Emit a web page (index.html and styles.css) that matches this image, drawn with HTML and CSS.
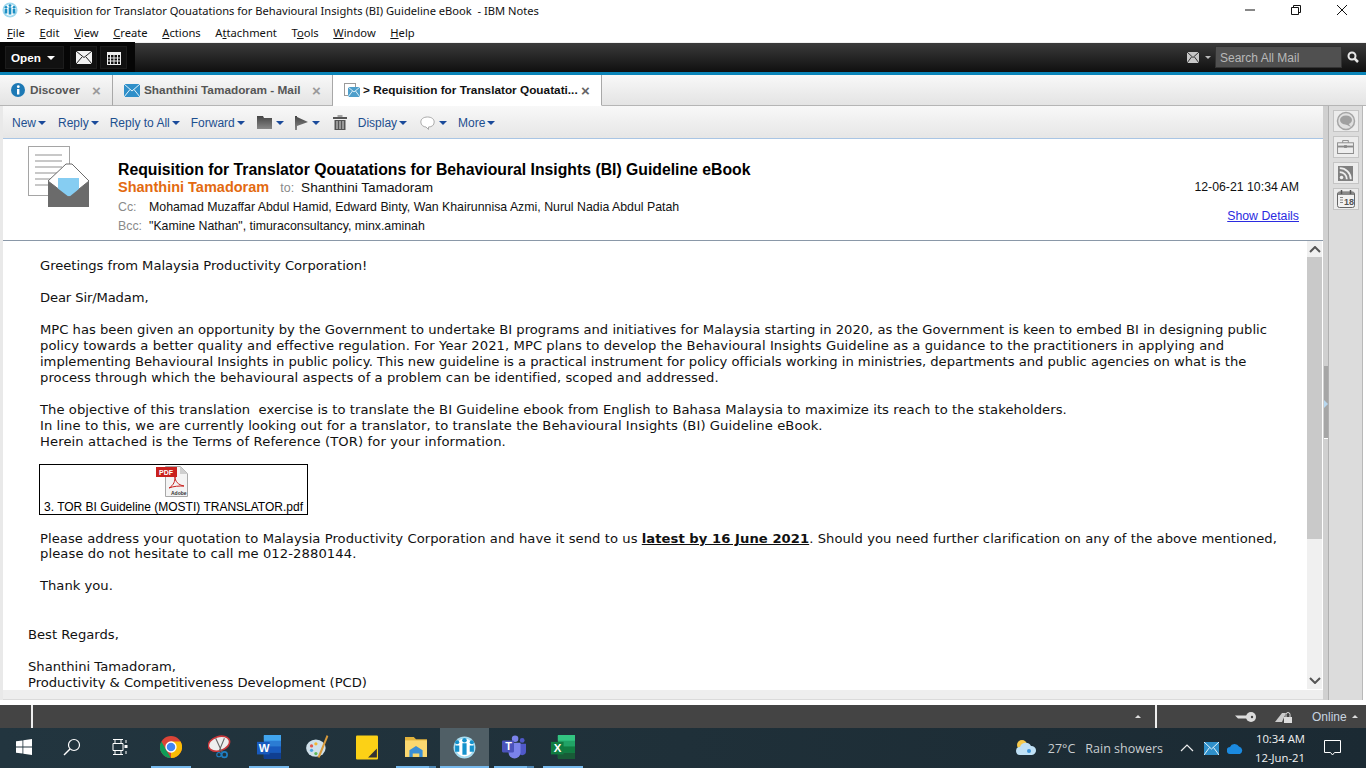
FILE: index.html
```html
<!DOCTYPE html>
<html lang="en">
<head>
<meta charset="utf-8">
<title>IBM Notes</title>
<link rel="stylesheet" href="styles.css">
</head>
<body>
<div class="app">
  <div class="titlebar">
    <svg class="app-icon" width="16" height="16" viewBox="0 0 18 18"><circle cx="9" cy="9" r="8.500" fill="#9fd8ee"/><circle cx="9" cy="9" r="6.500" fill="#fff"/><path d="M3 8h3v5H3zM7.500 6h3v8h-3zM12 8h3v5h-3z" fill="#1b8fc4"/><circle cx="4.500" cy="6" r="1.500" fill="#1b8fc4"/><circle cx="9" cy="4" r="1.600" fill="#1b8fc4"/><circle cx="13.500" cy="6" r="1.500" fill="#1b8fc4"/></svg>
    <span class="title-text">&gt; Requisition for Translator Qouatations for Behavioural Insights (BI) Guideline eBook&nbsp; - IBM Notes</span>
    <div class="winctl">
      <svg width="12" height="12" viewBox="0 0 12 12"><path d="M1 6h10" stroke="#111" fill="none"/></svg>
      <svg width="12" height="12" viewBox="0 0 12 12"><path d="M1.500 3.500h7v7h-7zM3.500 3.500v-2h7v7h-2" stroke="#111" fill="none"/></svg>
      <svg width="12" height="12" viewBox="0 0 12 12"><path d="M1 1l10 10M11 1L1 11" stroke="#111" fill="none"/></svg>
    </div>
  </div>
  <div class="menubar">
    <span><u>F</u>ile</span><span><u>E</u>dit</span><span><u>V</u>iew</span><span><u>C</u>reate</span><span><u>A</u>ctions</span><span>A<u>t</u>tachment</span><span>T<u>o</u>ols</span><span><u>W</u>indow</span><span><u>H</u>elp</span>
  </div>
  <div class="blackbar">
    <div class="black-left">
      <div class="open-btn">Open <i class="caret-white"></i></div>
      <div class="blk-btn"><svg width="16" height="13" viewBox="0 0 16 13"><rect width="16" height="13" fill="#f2f2f2"/><path d="M0 0l8 6.500L16 0M0 13l6-7M16 13l-6-7" stroke="#222" fill="none"/></svg></div>
      <div class="blk-btn"><svg width="14" height="14" viewBox="0 0 14 14"><rect x=".5" y="1.500" width="13" height="12" fill="none" stroke="#eee"/><rect x="0" y="1" width="14" height="3" fill="#eee"/><path d="M0 7h14M0 10h14M3.500 4v9M7 4v9M10.500 4v9" stroke="#eee"/></svg></div>
    </div>
    <div class="black-right">
      <svg width="12" height="11" viewBox="0 0 12 11"><rect width="12" height="11" fill="#c8c8c8"/><path d="M0 0l6 5.500L12 0M0 11l4.500-6M12 11L7.500 5" stroke="#333" fill="none"/></svg>
      <i class="caret-grey"></i>
      <div class="searchbox">Search All Mail</div>
      <svg class="search-ic" width="12" height="12" viewBox="0 0 12 12"><circle cx="5" cy="5" r="3.500" fill="none" stroke="#e8e8e8" stroke-width="2"/><path d="M7.500 7.500L11 11" stroke="#e8e8e8" stroke-width="2.500"/></svg>
    </div>
  </div>
  <div class="tabs">
    <div class="tab tab-discover">
      <svg width="14" height="14" viewBox="0 0 14 14"><circle cx="7" cy="7" r="7" fill="#1d79b5"/><rect x="6" y="6" width="2.400" height="5.500" fill="#fff"/><circle cx="7.300" cy="3.700" r="1.400" fill="#fff"/></svg>
      <span class="tab-label">Discover</span><span class="tab-x">×</span>
    </div>
    <div class="tab tab-mail">
      <svg width="16" height="13" viewBox="0 0 16 13"><rect width="16" height="13" fill="#2f8fc9"/><path d="M0 0l8 7 8-7M0 13l6-7.500M16 13l-6-7.500" stroke="#e3f3fb" fill="none"/></svg>
      <span class="tab-label">Shanthini Tamadoram - Mail</span><span class="tab-x">×</span>
    </div>
    <div class="tab tab-active">
      <svg width="16" height="15" viewBox="0 0 16 15"><rect x=".5" y=".5" width="11" height="12" fill="#fff" stroke="#9a9a9a"/><rect x="4" y="4" width="12" height="10" fill="#4f9fcb"/><path d="M4 4l6 5 6-5M4 14l4.500-6M16 14l-4.500-6" stroke="#d9eef8" fill="none"/></svg>
      <span class="tab-label">&gt; Requisition for Translator Qouatati...</span><span class="tab-x">×</span>
    </div>
    <div class="tabs-fill"></div>
  </div>
  <div class="workspace">
    <div class="document">
      <div class="toolbar">
        <span class="tool">New<i class="caret"></i></span>
        <span class="tool">Reply<i class="caret"></i></span>
        <span class="tool">Reply to All<i class="caret"></i></span>
        <span class="tool tool-fwd">Forward<i class="caret"></i></span>
        <span class="tool"><svg width="15" height="13" viewBox="0 0 15 13"><defs><linearGradient id="tg" x1="0" y1="0" x2="0" y2="1"><stop offset="0" stop-color="#444"/><stop offset="1" stop-color="#888"/></linearGradient></defs><path d="M0 0h6l1 2h8v11H0z" fill="url(#tg)"/></svg><i class="caret caret-wide"></i></span>
        <span class="tool tool-flag"><svg width="13" height="14" viewBox="0 0 13 14"><path d="M0 0h2v14H0zM2 1l11 5-11 4z" fill="url(#tg)"/></svg><i class="caret caret-wide"></i></span>
        <span class="tool"><svg width="14" height="15" viewBox="0 0 14 15"><path d="M4.500 1.500V.5h5v1M0 2h14v2H0zM1.500 5h11v10h-11z" fill="#555"/><path d="M4 6v8M7 6v8M10 6v8" stroke="#ddd"/></svg></span>
        <span class="tool tool-disp">Display<i class="caret"></i></span>
        <span class="tool"><svg width="15" height="14" viewBox="0 0 15 14"><path d="M7.500 1C3.500 1 .8 3 .8 6s2.700 5 5.200 5l2.500 2.500V11c3.500 0 5.700-2 5.700-5S11.500 1 7.500 1z" fill="#fff" stroke="#aaa"/></svg><i class="caret caret-wide"></i></span>
        <span class="tool">More<i class="caret"></i></span>
      </div>
      <div class="msg-head">
        <svg class="doc-icon" width="64" height="62" viewBox="0 0 64 62">
          <rect x=".5" y=".5" width="41" height="49" fill="#fff" stroke="#a5a5a5"/>
          <path d="M7 9h27M7 15h27M7 21h27M7 27h27M7 33h27M7 39h27" stroke="#c8c8c8" stroke-width="2"/>
          <path d="M20 35L38 18h6l17 17-20 16z" fill="#fff" stroke="#6b6b6b"/>
          <path d="M30 32h21v11l-7 7h-6l-8-7z" fill="#86cdf2"/>
          <path d="M20 35l21 16 20-16v26H20z" fill="#6b6b6b"/>
        </svg>
        <div class="head-main">
          <div class="subject">Requisition for Translator Qouatations for Behavioural Insights (BI) Guideline eBook</div>
          <div class="from-row"><span class="sender">Shanthini Tamadoram</span><span class="to-lbl">to:</span><span>Shanthini Tamadoram</span></div>
          <div class="addr-row"><span class="addr-lbl">Cc:</span><span>Mohamad Muzaffar Abdul Hamid, Edward Binty, Wan Khairunnisa Azmi, Nurul Nadia Abdul Patah</span></div>
          <div class="addr-row"><span class="addr-lbl">Bcc:</span><span>"Kamine Nathan", timuraconsultancy, minx.aminah</span></div>
        </div>
        <div class="head-side">
          <div class="date">12-06-21 10:34 AM</div>
          <div class="details">Show Details</div>
        </div>
      </div>
      <div class="msg-wrap">
        <div class="msg-body">
          <div class="inner">
            <p class="s-g">Greetings from Malaysia Productivity Corporation!</p>
            <p class="s-d">Dear Sir/Madam,</p>
            <p>MPC has been given an opportunity by the Government to undertake BI programs and initiatives for Malaysia starting in 2020, as the Government is keen to embed BI in designing public<br><span class="s-l2">policy towards a better quality and effective regulation. For Year 2021, MPC plans to develop the Behavioural Insights Guideline as a guidance to the practitioners in applying and</span><br><span class="s-l3">implementing Behavioural Insights in public policy. This new guideline is a practical instrument for policy officials working in ministries, departments and public agencies on what is the</span><br><span class="s-l4">process through which the behavioural aspects of a problem can be identified, scoped and addressed.</span></p>
            <p><span class="s-l4">The objective of this translation&nbsp; exercise is to translate the BI Guideline ebook from English to Bahasa Malaysia to maximize its reach to the stakeholders.</span><br><span class="s-in">In line to this, we are currently looking out for a translator, to translate the Behavioural Insights (BI) Guideline eBook.</span><br><span class="s-he">Herein attached is the Terms of Reference (TOR) for your information.</span></p>
            <div class="attach">
              <svg width="33" height="31" viewBox="0 0 33 31">
                <path d="M9.500 .5h15l7 7v23h-22z" fill="#f4f4f4" stroke="#a8a8a8"/>
                <path d="M24 0v8h8z" fill="#cfcfcf"/>
                <path d="M13 22c5-3 6-7 6-11 0 4 3 8 9 9-5 0-10 0-15 2z" fill="none" stroke="#c9211e"/>
                <rect x="0" y="1" width="21" height="10" fill="#c9211e"/>
                <text x="3" y="9" class="pdf-t">PDF</text>
                <text x="15" y="29" class="adobe-t">Adobe</text>
              </svg>
              <div class="attach-name">3. TOR BI Guideline (MOSTI) TRANSLATOR.pdf</div>
            </div>
            <p class="tight"><span class="s-l4">Please address your quotation to Malaysia Productivity Corporation and have it send to us <b><u>latest by 16 June 2021</u></b>. Should you need further clarification on any of the above mentioned,</span><br><span class="s-in">please do not hesitate to call me 012-2880144.</span></p>
            <p>Thank you.</p>
          </div>
          <div class="sign">
            <p>Best Regards,</p>
            <p>Shanthini Tamadoram,<br><span class="s-g">Productivity &amp; Competitiveness Development (PCD)</span></p>
          </div>
        </div>
        <div class="vscroll">
          <svg width="12" height="7" viewBox="0 0 12 7"><path d="M1 6l5-5 5 5" fill="none" stroke="#555" stroke-width="2"/></svg>
          <div class="vthumb"></div>
          <div class="vtrack"></div>
          <svg width="12" height="7" viewBox="0 0 12 7"><path d="M1 1l5 5 5-5" fill="none" stroke="#555" stroke-width="2"/></svg>
        </div>
      </div>
      <div class="hscroll"></div>
    </div>
    <div class="splitter"><div class="split-thumb"><i class="split-arrow"></i></div></div>
    <div class="sidebar">
      <div class="side-btn"><svg width="20" height="20" viewBox="0 0 20 20"><circle cx="10" cy="10" r="8.500" fill="#e0e0e0" stroke="#a5a5a5" stroke-width="1.500"/><ellipse cx="10" cy="9" rx="6" ry="4.500" fill="#a0a0a0"/><path d="M12 12l3 4-6-3z" fill="#a0a0a0"/></svg></div>
      <div class="side-btn"><svg width="17" height="14" viewBox="0 0 18 15"><path d="M6 3V.5h6V3" fill="none" stroke="#888"/><rect x=".5" y="3" width="17" height="11.500" fill="#eee" stroke="#888"/><path d="M1 7h16" stroke="#888" stroke-width="2"/><rect x="7.500" y="5.500" width="3" height="3" fill="#888"/></svg></div>
      <div class="side-btn"><svg width="15" height="15" viewBox="0 0 17 17"><rect width="17" height="17" fill="#808080"/><circle cx="4" cy="13" r="2" fill="#eee"/><path d="M2 7a8 8 0 0 1 8 8M2 2.500A12.500 12.500 0 0 1 14.500 15" fill="none" stroke="#eee" stroke-width="2"/></svg></div>
      <div class="side-btn"><svg width="18" height="18" viewBox="0 0 18 18"><rect x=".5" y="2" width="17" height="15.500" rx="2" fill="#f2f2f2" stroke="#666"/><rect x="1" y="2" width="16" height="3" fill="#888"/><path d="M4.500 0v4M13.500 0v4" stroke="#555" stroke-width="1.500"/><path d="M3 7.500h3M3 10h3M3 12.500h3" stroke="#888"/><text x="7" y="15" class="cal-t">18</text></svg></div>
    </div>
    <div class="edge"></div>
  </div>
  <div class="gap"></div>
  <div class="statusbar">
    <div class="st-a"></div>
    <div class="st-b"><i class="caret-up"></i></div>
    <div class="st-c">
      <svg width="21" height="10" viewBox="0 0 21 10"><circle cx="16" cy="5" r="5" fill="#ddd"/><circle cx="17" cy="5" r="1.200" fill="#444"/><path d="M0 3.500h12v3H3z" fill="#ddd"/></svg>
      <svg class="st-lock" width="18" height="12" viewBox="0 0 18 12"><path d="M0 11L7 2h4l-4 9z" fill="#ccc"/><rect x="9" y="6" width="8" height="6" fill="#ddd"/><path d="M11 6V3.500a2 2 0 0 1 4 0V6" fill="none" stroke="#ddd"/></svg>
      <span class="online">Online</span><i class="caret-up"></i>
    </div>
  </div>
  <div class="taskbar">
    <div class="task-left">
      <div class="ti sys"><svg width="16" height="16" viewBox="0 0 16 16"><path d="M0 2.300l6.500-.9v6.200H0zM7.300 1.300L16 0v7.600H7.300zM0 8.400h6.500v6.200L0 13.700zM7.300 8.400H16V16l-8.700-1.200z" fill="#fff"/></svg></div>
      <div class="ti sys"><svg width="18" height="18" viewBox="0 0 18 18"><circle cx="11" cy="7" r="5.500" fill="none" stroke="#fff" stroke-width="1.200"/><path d="M7 11l-6 6" stroke="#fff" stroke-width="1.500"/></svg></div>
      <div class="ti sys sys-last"><svg width="16" height="16" viewBox="0 0 16 16"><path d="M1 .5h10M1 15.500h10M1 4.500h10v7H1z" fill="none" stroke="#fff"/><path d="M14 1v3M14 12v3M3 .5v4M9 .5v4M3 11.500v4M9 11.500v4" stroke="#fff"/><rect x="12.500" y="6" width="3" height="3" fill="#fff"/></svg></div>
      <div class="ti run"><svg width="22" height="22" viewBox="0 0 20 20"><circle cx="10" cy="10" r="10" fill="#db4437"/><path d="M10 20a10 10 0 0 0 8.700-15H10z" fill="#fbbc05"/><path d="M1.300 5L6 13.500 10 20a10 10 0 0 1-8.700-15z" fill="#0f9d58"/><circle cx="10" cy="10" r="4.500" fill="#4285f4" stroke="#fff" stroke-width="1.300"/></svg></div>
      <div class="ti"><svg width="23" height="24" viewBox="0 0 21 22"><ellipse cx="10" cy="8" rx="10" ry="6.500" transform="rotate(-18 10 8)" fill="#eee" stroke="#c8363a" stroke-width="1.500"/><path d="M7 3l6 13M15 3L10 15" stroke="#666"/><circle cx="15" cy="18" r="2.500" fill="none" stroke="#1f7fc4" stroke-width="1.500"/><circle cx="10" cy="18" r="2" fill="none" stroke="#1f7fc4"/></svg></div>
      <div class="ti run"><svg width="24" height="24" viewBox="0 0 21 21"><rect x="6" width="15" height="21" rx="1" fill="#2b7cd3"/><rect x="6" width="15" height="5" fill="#41a5ee"/><rect x="6" y="10" width="15" height="5.500" fill="#185abd"/><rect x="6" y="15.500" width="15" height="5.500" fill="#103f91"/><rect y="6" width="11" height="11" fill="#185abd"/><text x="1.500" y="14.800" class="w-t">W</text></svg></div>
      <div class="ti"><svg width="23" height="26" viewBox="0 0 21 24"><ellipse cx="9" cy="13" rx="9" ry="8" fill="#cfe0ea"/><circle cx="5" cy="11" r="1.500" fill="#e2574c"/><circle cx="9" cy="9" r="1.500" fill="#f2b632"/><circle cx="5" cy="15" r="1.500" fill="#4aa3df"/><circle cx="9" cy="18" r="1.500" fill="#5db85c"/><path d="M19 1l1.500 1-8 20-2-.5z" fill="#d79a3c"/></svg></div>
      <div class="ti"><svg width="22" height="25" viewBox="0 0 20 22"><rect width="20" height="22" rx="1" fill="#fcd116"/><path d="M11 20l8-8v8z" fill="#333"/></svg></div>
      <div class="ti run run-multi"><svg width="22" height="20" viewBox="0 0 20 18"><path d="M0 0h8l2 2h10v16H0z" fill="#e2b33c"/><rect y="3" width="20" height="15" fill="#fbd870"/><path d="M4 12l6-4 6 4v6h-3v-3H7v3H4z" fill="#3b8fd6"/></svg></div>
      <div class="ti active"><svg width="23" height="23" viewBox="0 0 22 22"><circle cx="11" cy="11" r="10.500" fill="#a8dcf0"/><circle cx="11" cy="11" r="8.500" fill="#fff"/><path d="M2 9h4v6H2zM9 7h4v11H9zM16 9h4v6h-4z" fill="#1592cc"/><circle cx="4" cy="6" r="2" fill="#1592cc"/><circle cx="11" cy="4" r="2.200" fill="#1592cc"/><circle cx="18" cy="6" r="2" fill="#1592cc"/></svg></div>
      <div class="ti run run-multi"><svg width="24" height="24" viewBox="0 0 22 22"><circle cx="12" cy="3.500" r="3" fill="#7b83eb"/><circle cx="18.500" cy="5" r="2.200" fill="#5059c9"/><path d="M15 8h7v7a3.500 3.500 0 0 1-7 0z" fill="#5059c9"/><path d="M6 7h11v9a5 5 0 0 1-11 0z" fill="#7b83eb"/><rect y="5" width="11" height="11" rx="1" fill="#4b53bc"/><text x="3" y="14" class="w-t">T</text></svg></div>
      <div class="ti run"><svg width="24" height="24" viewBox="0 0 21 21"><rect x="6" width="15" height="21" rx="1" fill="#21a366"/><rect x="6" width="15" height="5" fill="#33c481"/><rect x="6" y="10" width="15" height="5.500" fill="#107c41"/><rect x="6" y="15.500" width="15" height="5.500" fill="#185c37"/><rect y="6" width="11" height="11" fill="#107c41"/><text x="2.500" y="15" class="w-t">X</text></svg></div>
    </div>
    <div class="tray">
      <svg width="22" height="18" viewBox="0 0 22 18"><circle cx="7" cy="6" r="5" fill="#f7c94b"/><path d="M5 16a4 4 0 0 1 0-8 6 6 0 0 1 11-1 4.500 4.500 0 0 1 1 9z" fill="#bfe0f5"/><circle cx="14" cy="12" r="2" fill="#3d94d8"/></svg>
      <span class="weather">27°C</span><span class="weather w2">Rain showers</span>
      <svg class="chev" width="14" height="8" viewBox="0 0 14 8"><path d="M1 7l6-6 6 6" fill="none" stroke="#eee" stroke-width="1.200"/></svg>
      <svg class="tray-mail" width="15" height="13" viewBox="0 0 15 13"><rect width="15" height="13" fill="#2f8fc9"/><path d="M0 0l7.500 7L15 0M0 13l5.500-7.500M15 13L9.500 5.500" stroke="#e3f3fb" fill="none"/></svg>
      <svg class="cloud" width="17" height="11" viewBox="0 0 17 11"><path d="M3.500 11a3.500 3.500 0 0 1-.5-7A5 5 0 0 1 12 3.500 4 4 0 0 1 13 11z" fill="#1b8ae0"/></svg>
      <div class="clock"><div>10:34 AM</div><div>12-Jun-21</div></div>
      <svg class="notif" width="17" height="16" viewBox="0 0 17 16"><path d="M.5 .5h16v12h-6l-2 2.500-2-2.500h-6z" fill="none" stroke="#fff"/></svg>
    </div>
  </div>
</div>
</body>
</html>
```
FILE: styles.css
```css
* { box-sizing: border-box; }
html, body { margin: 0; padding: 0; }
body { width: 1366px; height: 768px; overflow: hidden; background: #fff; font-family: "Liberation Sans", Arial, sans-serif; }
.app { display: flex; flex-direction: column; width: 1366px; height: 768px; }
i { display: inline-block; }

.titlebar { height: 22px; flex: none; display: flex; align-items: center; padding-left: 2px; background: #fff; font-family: "Noto Sans", "Open Sans", sans-serif; font-size: 11.150px; color: #111; }
.app-icon { flex: none; margin-right: 7px; margin-top: -2px; }
.title-text { white-space: nowrap; margin-top: -2px; }
.winctl { margin-left: auto; display: flex; gap: 34px; padding-right: 18px; align-items: center; margin-top: -2px; }

.menubar { height: 20px; flex: none; display: flex; align-items: center; gap: 14.600px; padding-left: 7px; font-family: "Noto Sans", "Open Sans", sans-serif; font-size: 11.200px; color: #111; background: #fff; }

.blackbar { height: 33px; flex: none; display: flex; justify-content: space-between; background: linear-gradient(#3c3c3c, #0f0f0f); border-bottom: 3px solid #0a84b8; box-shadow: inset 0 1px 0 #f0f0f0; }
.black-left { display: flex; align-items: center; gap: 6px; background: #060606; width: 135px; padding-left: 5px; height: 30px; padding-top: 1px; }
.open-btn { width: 59px; height: 23px; display: flex; align-items: center; gap: 6px; padding-left: 5px; color: #fff; font-size: 11.700px; font-weight: bold; background: #111; border: 1px solid #1c1c1c; }
.caret-white { border-left: 4px solid transparent; border-right: 4px solid transparent; border-top: 4px solid #fff; }
.blk-btn { width: 27px; height: 23px; display: flex; align-items: center; justify-content: center; background: #111; border: 1px solid #1c1c1c; }
.blk-btn + .blk-btn { margin-left: -3px; }
.black-right { display: flex; align-items: center; height: 30px; padding-right: 7px; }
.caret-grey { margin-left: 6px; border-left: 3px solid transparent; border-right: 3px solid transparent; border-top: 3px solid #bbb; margin-right: 4px; }
.searchbox { width: 127px; height: 22px; padding-left: 4px; line-height: 22px; background: #505050; border: 1px solid #333; color: #b8b8b8; font-size: 12px; }
.search-ic { margin-left: 5px; }

.tabs { height: 31px; flex: none; display: flex; background: linear-gradient(#f8f8f8, #e3e3e3); font-size: 11.800px; font-weight: bold; color: #555; }
.tab { display: flex; align-items: center; height: 31px; border-right: 1px solid #a8a8a8; border-bottom: 1px solid #b5b5b5; white-space: nowrap; }
.tab-discover { width: 113px; padding-left: 11px; }
.tab-discover .tab-label { margin-left: 5px; width: 62px; }
.tab-mail { width: 220px; padding-left: 11px; }
.tab-mail .tab-label { margin-left: 4px; width: 168px; }
.tab-active { width: 269px; padding-left: 11px; background: #fff; color: #111; border-bottom: 1px solid #fff; }
.tab-active .tab-label { margin-left: 3px; width: 218px; }
.tab-x { font-size: 15px; color: #9a9a9a; font-weight: bold; line-height: 1; }
.tab-active .tab-x { color: #666; }
.tabs-fill { flex: 1; border-bottom: 1px solid #b5b5b5; }

.workspace { height: 594px; flex: none; display: flex; background: #fff; }
.document { width: 1323px; flex: none; display: flex; flex-direction: column; padding-left: 3px; background: linear-gradient(90deg, #e9e9e9 0, #e9e9e9 3px, #fff 3px); }

.toolbar { height: 33px; flex: none; display: flex; align-items: center; padding: 1px 0 0 9px; background: linear-gradient(#f8f8f8, #e6e6e6); border-bottom: 1px solid #a9c5e4; font-size: 12px; color: #1d4f8f; }
.tool { display: flex; align-items: center; margin-right: 11px; }
.tool:first-child { margin-right: 12px; }
.tool-fwd { margin-right: 12px; }
.tool-flag { margin-right: 13px; }
.tool-disp { margin-right: 13px; }
.caret { margin-left: 2px; border-left: 4px solid transparent; border-right: 4px solid transparent; border-top: 4px solid #1a4a9a; }
.caret-wide { margin-left: 4px; }

.msg-head { height: 102px; flex: none; display: flex; border-bottom: 1px solid #8a98a8; background: #fff; padding-left: 25px; }
.doc-icon { flex: none; margin-top: 7px; margin-right: 26px; }
.head-main { flex: 1; padding-top: 22px; font-size: 12.330px; color: #111; }
.subject { font-size: 15.780px; font-weight: bold; line-height: 17px; color: #000; }
.from-row { display: flex; align-items: baseline; line-height: 16px; font-size: 13.600px; margin-top: 1px; }
.sender { color: #e36a10; font-weight: bold; font-size: 14.500px; margin-right: 11px; }
.to-lbl { color: #8a8a8a; font-size: 12.500px; margin-right: 7px; }
.addr-row { display: flex; line-height: 19px; }
.addr-row:nth-child(3) { margin-top: 2px; }
.addr-lbl { width: 31px; color: #8a8a8a; flex: none; }
.head-side { width: 120px; padding-top: 41px; text-align: right; font-size: 12.300px; color: #111; margin-right: 24px; }
.details { margin-top: 15px; color: #2b2be0; text-decoration: underline; }

.msg-wrap { flex: 1; min-height: 0; display: flex; }
.msg-body { flex: 1; overflow: hidden; padding: 17px 0 0 25px; font-family: "DejaVu Sans", Verdana, sans-serif; font-size: 13.150px; line-height: 16px; color: #111; white-space: nowrap; background: #fff; }
.msg-body p { margin: 0 0 16px; }
.msg-body p.tight { line-height: 15px; margin-bottom: 17px; }
.s-g { letter-spacing: -.04px; }
.s-d { letter-spacing: -.13px; }
.s-l2 { letter-spacing: .06px; }
.s-l3 { letter-spacing: -.03px; }
.s-l4 { letter-spacing: .05px; }
.s-in { letter-spacing: .08px; }
.s-he { letter-spacing: .11px; }
.inner { padding-left: 12px; }
.attach { width: 269px; height: 51px; border: 1px solid #000; display: flex; flex-direction: column; align-items: center; margin: -2px 0 16px -1px; }
.attach svg { margin: 1px 0 0 -2px; flex: none; }
.attach-name { font-family: "Liberation Sans", Arial, sans-serif; font-size: 12px; line-height: 15px; color: #000; margin-top: 3px; }
.pdf-t { font: bold 7px "Liberation Sans", sans-serif; fill: #fff; }
.adobe-t { font: bold 5px "Liberation Sans", sans-serif; fill: #333; }
.cal-t { font: bold 9px "Liberation Sans", sans-serif; fill: #555; }
.w-t { font: bold 10px "Liberation Sans", sans-serif; fill: #fff; }
.sign { margin-top: 33px; }

.vscroll { width: 15px; flex: none; display: flex; flex-direction: column; align-items: center; background: #f0f0f0; padding-top: 5px; margin-right: 1px; }
.vthumb { width: 15px; height: 282px; background: #c9c9c9; margin-top: 4px; flex: none; }
.vtrack { flex: 1; }
.vscroll svg { flex: none; }
.vscroll svg:last-child { margin-bottom: 5px; }
.hscroll { height: 11px; flex: none; background: #eeeeee; border-top: 1px solid #fff; border-bottom: 1px solid #dadada; }

.splitter { width: 6px; flex: none; background: #d0d0d0; border-right: 1px solid #b0b0b0; padding-top: 260px; }
.split-thumb { width: 4px; margin-left: 1px; height: 73px; background: #a6a6a6; position: relative; border-bottom: 1px solid #fff; }
.split-arrow { position: absolute; left: 0; top: 34px; border-top: 4px solid transparent; border-bottom: 4px solid transparent; border-left: 4px solid #b8d8f0; }
.sidebar { width: 34px; flex: none; background: #dcdcdc; display: flex; flex-direction: column; align-items: center; gap: 4px; padding-top: 4px; border-right: 1px solid #b8b8b8; }
.side-btn { width: 26px; height: 22px; display: flex; align-items: center; justify-content: center; background: #ececec; border: 1px solid #c4c4c4; }
.edge { flex: 1; background: #fff; }

.gap { height: 5px; flex: none; background: #fff; }
.statusbar { height: 23px; flex: none; display: flex; background: #444444; color: #ddd; }
.st-a { width: 33px; border-right: 2px solid #eee; }
.st-b { width: 1124px; border-right: 2px solid #eee; display: flex; align-items: center; justify-content: flex-end; padding-right: 14px; }
.st-c { flex: 1; display: flex; align-items: center; padding-left: 78px; }
.st-lock { margin-left: 19px; }
.online { margin-left: 19px; font-size: 12px; color: #c8d4e0; }
.caret-up { border-left: 3px solid transparent; border-right: 3px solid transparent; border-bottom: 3px solid #ddd; margin-left: 5px; }

.taskbar { height: 40px; flex: none; display: flex; justify-content: space-between; background: linear-gradient(90deg, #22353f, #1f3039 50%, #1b2a33); color: #e8e8e8; font-family: "Open Sans", "Noto Sans", sans-serif; }
.task-left { display: flex; }
.ti { width: 49px; height: 40px; display: flex; align-items: center; justify-content: center; padding-bottom: 2px; }
.sys { width: 48px; }
.sys-last { margin-right: 2px; }
.run { background: linear-gradient(#76b9ed, #76b9ed) center bottom / 40px 2px no-repeat; }
.run-multi { background: linear-gradient(90deg, #76b9ed 33px, #4f87b4 33px) center bottom / 40px 2px no-repeat; }
.active { background: #505f66; box-shadow: inset 0 -2px 0 #76b9ed; }
.tray { display: flex; align-items: center; padding-right: 25px; }
.weather { font-size: 12.500px; color: #c8cdd0; margin-left: 11px; }
.w2 { margin-left: 10px; }
.chev { margin-left: 17px; }
.tray-mail { margin-left: 10px; }
.cloud { margin-left: 8px; }
.clock { text-align: right; width: 61px; font-size: 11.300px; line-height: 19.500px; color: #f2f2f2; }
.notif { margin-left: 19px; }
```
